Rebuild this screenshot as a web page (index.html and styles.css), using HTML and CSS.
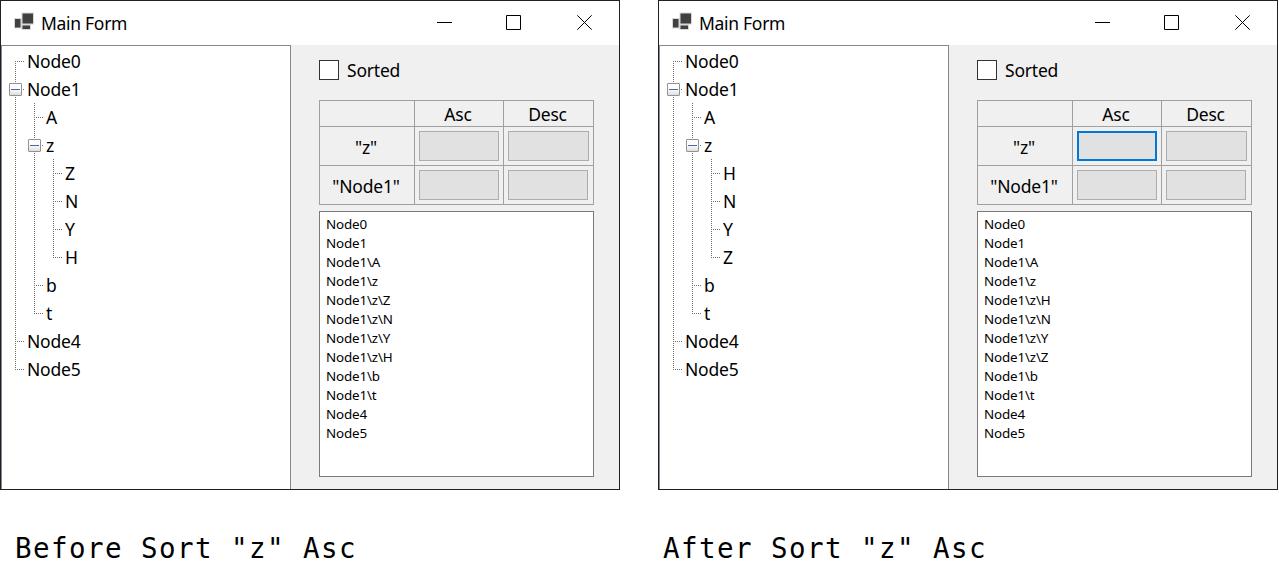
FILE: index.html
```html
<!DOCTYPE html>
<html lang="en">
<head>
<meta charset="utf-8">
<title>Main Form</title>
<link rel="stylesheet" href="styles.css">
</head>
<body>
<main class="page">
  <figure class="shot">
    <section class="window">
      <header class="titlebar">
        <svg class="app-icon" width="22" height="20" viewBox="0 0 22 20"><path fill="#d8d8d8" d="M0 5h7.500V-.5H20v12h-3v5.500H7.500v-1.500H0z"/><path fill="#404040" d="M1 6h5.500v8.500H1zM8.500 .4H19v10H8.500zM8.500 12.500h7.500v3.500h-7.500z"/></svg>
        <h1 class="title">Main Form</h1>
        <svg class="controls" width="155" height="15" viewBox="0 0 155 15" fill="none" stroke="#000"><path d="M0 7.500h15M69.500 .5h14v14h-14z"/><path d="M140.300 .3l14.400 14.400M154.700 .3l-14.400 14.400"/></svg>
      </header>
      <div class="client">
        <nav class="tree">
          <ul class="nodes">
            <li class="node"><span class="row">Node0</span></li>
            <li class="node open"><span class="row">Node1</span>
              <ul class="nodes">
                <li class="node"><span class="row">A</span></li>
                <li class="node open"><span class="row">z</span>
                  <ul class="nodes">
                    <li class="node"><span class="row">Z</span></li>
                    <li class="node"><span class="row">N</span></li>
                    <li class="node"><span class="row">Y</span></li>
                    <li class="node"><span class="row">H</span></li>
                  </ul>
                </li>
                <li class="node"><span class="row">b</span></li>
                <li class="node"><span class="row">t</span></li>
              </ul>
            </li>
            <li class="node"><span class="row">Node4</span></li>
            <li class="node"><span class="row">Node5</span></li>
          </ul>
        </nav>
        <div class="panel">
          <label class="check"><span class="box"></span>Sorted</label>
          <div class="grid">
            <div class="cell"></div><div class="cell head">Asc</div><div class="cell head">Desc</div>
            <div class="cell">"z"</div><div class="cell slot"><button class="btn"></button></div><div class="cell slot"><button class="btn wide"></button></div>
            <div class="cell">"Node1"</div><div class="cell slot"><button class="btn"></button></div><div class="cell slot"><button class="btn"></button></div>
          </div>
          <ul class="list">
            <li>Node0</li><li>Node1</li><li>Node1\A</li><li>Node1\z</li><li>Node1\z\Z</li><li>Node1\z\N</li><li>Node1\z\Y</li><li>Node1\z\H</li><li>Node1\b</li><li>Node1\t</li><li>Node4</li><li>Node5</li>
          </ul>
        </div>
      </div>
    </section>
    <figcaption class="caption before">Before Sort "z" Asc</figcaption>
  </figure>
  <figure class="shot">
    <section class="window">
      <header class="titlebar">
        <svg class="app-icon" width="22" height="20" viewBox="0 0 22 20"><path fill="#d8d8d8" d="M0 5h7.500V-.5H20v12h-3v5.500H7.500v-1.500H0z"/><path fill="#404040" d="M1 6h5.500v8.500H1zM8.500 .4H19v10H8.500zM8.500 12.500h7.500v3.500h-7.500z"/></svg>
        <h1 class="title">Main Form</h1>
        <svg class="controls" width="155" height="15" viewBox="0 0 155 15" fill="none" stroke="#000"><path d="M0 7.500h15M69.500 .5h14v14h-14z"/><path d="M140.300 .3l14.400 14.400M154.700 .3l-14.400 14.400"/></svg>
      </header>
      <div class="client">
        <nav class="tree">
          <ul class="nodes">
            <li class="node"><span class="row">Node0</span></li>
            <li class="node open"><span class="row">Node1</span>
              <ul class="nodes">
                <li class="node"><span class="row">A</span></li>
                <li class="node open"><span class="row">z</span>
                  <ul class="nodes">
                    <li class="node"><span class="row">H</span></li>
                    <li class="node"><span class="row">N</span></li>
                    <li class="node"><span class="row">Y</span></li>
                    <li class="node"><span class="row">Z</span></li>
                  </ul>
                </li>
                <li class="node"><span class="row">b</span></li>
                <li class="node"><span class="row">t</span></li>
              </ul>
            </li>
            <li class="node"><span class="row">Node4</span></li>
            <li class="node"><span class="row">Node5</span></li>
          </ul>
        </nav>
        <div class="panel">
          <label class="check"><span class="box"></span>Sorted</label>
          <div class="grid">
            <div class="cell"></div><div class="cell head">Asc</div><div class="cell head">Desc</div>
            <div class="cell">"z"</div><div class="cell slot"><button class="btn active"></button></div><div class="cell slot"><button class="btn wide"></button></div>
            <div class="cell">"Node1"</div><div class="cell slot"><button class="btn"></button></div><div class="cell slot"><button class="btn"></button></div>
          </div>
          <ul class="list">
            <li>Node0</li><li>Node1</li><li>Node1\A</li><li>Node1\z</li><li>Node1\z\H</li><li>Node1\z\N</li><li>Node1\z\Y</li><li>Node1\z\Z</li><li>Node1\b</li><li>Node1\t</li><li>Node4</li><li>Node5</li>
          </ul>
        </div>
      </div>
    </section>
    <figcaption class="caption after">After Sort "z" Asc</figcaption>
  </figure>
</main>
</body>
</html>
```
FILE: styles.css
```css
*, *::before, *::after { box-sizing: border-box; }
body { margin: 0; background: #fff; color: #000; font: 17.5px/28px "Noto Sans", "Open Sans", sans-serif; overflow: hidden; }
ul { list-style: none; margin: 0; padding: 0; }
.page { display: flex; gap: 38px; height: 578px; }
.shot { margin: 0; width: 620px; flex: none; }
.window { height: 490px; border: 1px solid #222026; display: flex; flex-direction: column; background: #fff; }

.titlebar { height: 44px; flex: none; display: flex; padding-left: 13px; }
.app-icon { margin-top: 12px; overflow: visible; }
.title { margin: 8px 0 0 5px; font-size: 17.5px; font-weight: 400; line-height: 28px; letter-spacing: -0.3px; }
.controls { margin: 14px 27px 0 auto; }

.client { flex: 1; display: flex; min-height: 0; }
.tree { width: 290px; flex: none; border: solid #828790; border-width: 1px 1px 0 1px; padding: 1px 0 0 6px; letter-spacing: -0.2px; }

/* Tree lines: each node draws its own vertical segment and a stub to its label */
.node { position: relative; padding-left: 19px; }
.row { display: block; height: 28px; }
.node::before { content: ""; position: absolute; left: 7px; top: 0; bottom: 0; width: 1px; background: repeating-linear-gradient(#707070 0 1px, transparent 1px 2px); }
.node:last-child::before { bottom: auto; height: 15px; }
.tree > .nodes > .node:first-child::before { top: 14px; }
.row::before { content: ""; position: absolute; left: 7px; top: 14px; width: 9px; height: 1px; background: repeating-linear-gradient(90deg, #707070 0 1px, transparent 1px 2px); }
.open > .row::after { content: ""; position: absolute; left: 1px; top: 8px; width: 13px; height: 13px; border: 1px solid #919191; border-radius: 1px; background: linear-gradient(#4b63a7, #4b63a7) center / 9px 1px no-repeat, linear-gradient(#fff 45%, #dedede); }

.panel { flex: 1; background: #f0f0f0; padding: 11px 25px 0 28px; display: flex; flex-direction: column; }
.check { display: flex; align-items: center; height: 28px; gap: 8px; letter-spacing: -0.2px; }
.box { width: 20px; height: 20px; border: 1px solid #333; background: #fff; }
.grid { margin-top: 16px; width: 275px; display: grid; grid-template: 25px 38px 38px / 94px 88px 89px; gap: 1px; padding: 1px; background: #a0a0a0; }
.cell { background: #f0f0f0; display: flex; align-items: center; justify-content: center; padding: 2px 2px 0 0; letter-spacing: -0.2px; min-height: 0; }
.head { padding-top: 1px; }
.slot { padding: 4px; justify-content: flex-start; }
.btn { width: 80px; height: 30px; padding: 0; border: 1px solid #adadad; background: #e1e1e1; }
.wide { width: 81px; }
.active { border: 2px solid #0078d7; }
.list { margin-top: 6px; width: 275px; height: 266px; border: 1px solid #7a7a7a; background: #fff; padding: 3px 6px; font-size: 13.4px; line-height: 19px; letter-spacing: -0.15px; }

.caption { font: 27.5px/40px "DejaVu Sans Mono", monospace; letter-spacing: 1.45px; margin-top: 38px; white-space: pre; }
.before { padding-left: 15px; }
.after { padding-left: 5px; }
```
